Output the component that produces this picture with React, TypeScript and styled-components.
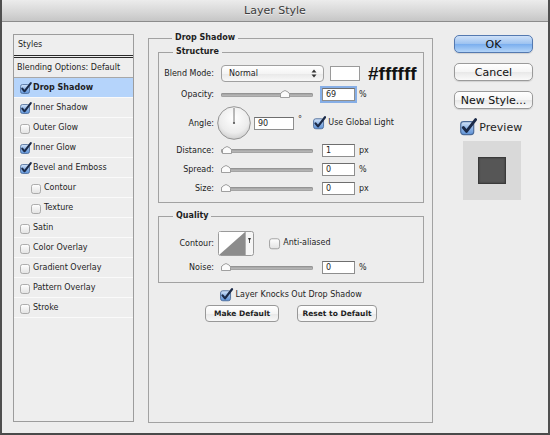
import React from "react";
import styled, { createGlobalStyle } from "styled-components";

const GlobalStyle = createGlobalStyle`
  html, body { margin: 0; padding: 0; background: #ededed; }
  body { font-family: "DejaVu Sans", "Noto Sans", sans-serif; }
`;

const styleItems = [
  { name: "Drop Shadow", checked: true, selected: true },
  { name: "Inner Shadow", checked: true },
  { name: "Outer Glow", checked: false },
  { name: "Inner Glow", checked: true },
  { name: "Bevel and Emboss", checked: true },
  { name: "Contour", checked: false, indent: true },
  { name: "Texture", checked: false, indent: true },
  { name: "Satin", checked: false },
  { name: "Color Overlay", checked: false },
  { name: "Gradient Overlay", checked: false },
  { name: "Pattern Overlay", checked: false },
  { name: "Stroke", checked: false },
];

const Checkbox = ({ checked, size = 9 }: { checked: boolean; size?: number }) => {
  const w = (size * 12) / 9;
  const h = (size * 12) / 9;
  return (
    <svg width={w} height={h} viewBox="0 0 12 12" style={{ flex: "none" }}>
      <defs>
        <linearGradient id="cbOn" x1="0" y1="0" x2="0" y2="1">
          <stop offset="0" stopColor="#d6e6fa" />
          <stop offset="0.5" stopColor="#8fb5e6" />
          <stop offset="1" stopColor="#5f92d6" />
        </linearGradient>
        <linearGradient id="cbOff" x1="0" y1="0" x2="0" y2="1">
          <stop offset="0" stopColor="#ffffff" />
          <stop offset="1" stopColor="#e2e2e2" />
        </linearGradient>
      </defs>
      <rect
        x="0.5"
        y="2.5"
        width="9"
        height="9"
        rx="2"
        fill={checked ? "url(#cbOn)" : "url(#cbOff)"}
        stroke={checked ? "#4a6a98" : "#9a9a9a"}
        strokeWidth="0.8"
      />
      {checked && (
        <path
          d="M2.3 6.6 L4.5 9.3 L10.8 1.1"
          fill="none"
          stroke="#1b2a48"
          strokeWidth="2"
          strokeLinecap="round"
          strokeLinejoin="round"
        />
      )}
    </svg>
  );
};

const Thumb = () => (
  <svg width="10" height="8" viewBox="0 0 10 8">
    <path
      d="M0.5 7.5 L0.5 4.5 Q0.5 3 2 2 L5 0.5 L8 2 Q9.5 3 9.5 4.5 L9.5 7.5 Z"
      fill="#fbfbfb"
      stroke="#8a8a8a"
      strokeWidth="0.8"
    />
  </svg>
);

const Slider = ({ value }: { value: number }) => (
  <Track>
    <ThumbWrap style={{ left: `${value * 0.86}px` }}>
      <Thumb />
    </ThumbWrap>
  </Track>
);

const Dial = ({ angle }: { angle: number }) => {
  const r = (angle * Math.PI) / 180;
  const x = 17 + Math.cos(r) * 15;
  const y = 17 - Math.sin(r) * 15;
  return (
    <svg width="34" height="34" viewBox="0 0 34 34">
      <defs>
        <radialGradient id="dialFill" cx="0.5" cy="0.35" r="0.65">
          <stop offset="0" stopColor="#ffffff" />
          <stop offset="0.7" stopColor="#ececec" />
          <stop offset="1" stopColor="#cfcfcf" />
        </radialGradient>
      </defs>
      <circle cx="17" cy="17" r="16.3" fill="url(#dialFill)" stroke="#8a8a8a" strokeWidth="0.9" />
      <line x1="17" y1="17" x2={x} y2={y} stroke="#6a6a6a" strokeWidth="0.9" />
      <circle cx="17" cy="17" r="1.1" fill="#555" />
    </svg>
  );
};

const ContourPicker = () => (
  <svg width="36" height="25" viewBox="0 0 36 25">
    <rect x="0.5" y="0.5" width="35" height="24" rx="2" fill="#f6f6f6" stroke="#9a9a9a" />
    <rect x="1" y="1" width="26" height="23" fill="#ffffff" />
    <polygon points="1,24 27,1 27,24" fill="#8c8c8c" />
    <line x1="27.5" y1="1" x2="27.5" y2="24" stroke="#b0b0b0" />
    <path d="M30 7 L33 7 L31.5 10 Z" fill="#333" />
    <line x1="31.5" y1="9" x2="31.5" y2="12" stroke="#333" strokeWidth="0.8" />
  </svg>
);

const SelectArrows = () => (
  <svg width="6" height="9" viewBox="0 0 6 9">
    <path d="M3 0.5 L5.5 3.5 L0.5 3.5 Z" fill="#333" />
    <path d="M3 8.5 L5.5 5.5 L0.5 5.5 Z" fill="#333" />
  </svg>
);

export default function App() {
  return (
    <>
      <GlobalStyle />
      <Window>
        <TitleBar>Layer Style</TitleBar>
        <Body>
          <StylesPanel>
            <PanelHeader>Styles</PanelHeader>
            <BlendRow>Blending Options: Default</BlendRow>
            {styleItems.map((item) => (
              <StyleRow key={item.name} $selected={!!item.selected} $indent={!!item.indent}>
                <Checkbox checked={item.checked} />
                <span>{item.name}</span>
              </StyleRow>
            ))}
          </StylesPanel>

          <MainGroup>
            <Legend>Drop Shadow</Legend>
            <SubGroup $pb={4}>
              <Legend>Structure</Legend>
              <Row $h={17} $mt={6}>
                <Label>Blend Mode:</Label>
                <Select>
                  <span>Normal</span>
                  <SelectArrows />
                </Select>
                <Swatch />
                <HexText>#ffffff</HexText>
              </Row>
              <Row $h={15} $mt={5}>
                <Label>Opacity:</Label>
                <Slider value={69} />
                <NumberBox $focused>69</NumberBox>
                <Unit>%</Unit>
              </Row>
              <Row $h={34} $mt={4} $gap={3}>
                <Label>Angle:</Label>
                <Dial angle={90} />
                <AngleBox>90</AngleBox>
                <Degree>°</Degree>
                <CheckLabel>
                  <Checkbox checked size={10} />
                  <span>Use Global Light</span>
                </CheckLabel>
              </Row>
              <Row $h={19} $mt={1}>
                <Label>Distance:</Label>
                <Slider value={1} />
                <NumberBox>1</NumberBox>
                <Unit>px</Unit>
              </Row>
              <Row $h={19}>
                <Label>Spread:</Label>
                <Slider value={0} />
                <NumberBox>0</NumberBox>
                <Unit>%</Unit>
              </Row>
              <Row $h={19}>
                <Label>Size:</Label>
                <Slider value={0} />
                <NumberBox>0</NumberBox>
                <Unit>px</Unit>
              </Row>
            </SubGroup>

            <SubGroup $pt={8} $pb={5} $mt={6}>
              <Legend>Quality</Legend>
              <Row $h={24} $gap={4}>
                <Label>Contour:</Label>
                <ContourPicker />
                <AntiAlias>
                  <Checkbox checked={false} size={10} />
                  <span>Anti-aliased</span>
                </AntiAlias>
              </Row>
              <Row $h={19} $mt={3}>
                <Label>Noise:</Label>
                <Slider value={0} />
                <NumberBox>0</NumberBox>
                <Unit>%</Unit>
              </Row>
            </SubGroup>

            <CenterRow $h={14} $mt={5}>
              <CheckLabel>
                <Checkbox checked size={10} />
                <span>Layer Knocks Out Drop Shadow</span>
              </CheckLabel>
            </CenterRow>
            <CenterRow $h={17} $mt={3} $gap={18}>
              <SmallButton $w={74}>Make Default</SmallButton>
              <SmallButton $w={80}>Reset to Default</SmallButton>
            </CenterRow>
          </MainGroup>

          <Side>
            <DialogButton $primary>OK</DialogButton>
            <DialogButton>Cancel</DialogButton>
            <DialogButton>New Style...</DialogButton>
            <PreviewToggle>
              <Checkbox checked size={13} />
              <span>Preview</span>
            </PreviewToggle>
            <PreviewBox>
              <PreviewSwatch />
            </PreviewBox>
          </Side>
        </Body>
      </Window>
    </>
  );
}

const Window = styled.div`
  box-sizing: border-box;
  width: 550px;
  height: 435px;
  background: #ededed;
  border-left: 2px solid #4f4f4f;
  border-right: 2px solid #4f4f4f;
  border-bottom: 2px solid #4a4a4a;
  display: flex;
  flex-direction: column;
  overflow: hidden;
  color: #1e1e1e;
  font-size: 8px;
`;

const TitleBar = styled.div`
  height: 21px;
  line-height: 21px;
  flex: none;
  text-align: center;
  font-size: 11px;
  color: #3c3c3c;
  background: linear-gradient(#ececec, #d6d6d6 60%, #c6c6c6);
  border-bottom: 1px solid #8c8c8c;
  text-shadow: 0 1px 0 rgba(255, 255, 255, 0.6);
`;

const Body = styled.div`
  display: flex;
  align-items: flex-start;
  padding-left: 11px;
`;

const StylesPanel = styled.div`
  box-sizing: border-box;
  width: 121px;
  height: 388px;
  margin-top: 12px;
  border: 1px solid #9c9c9c;
  background: #eeeeee;
  display: flex;
  flex-direction: column;
`;

const PanelHeader = styled.div`
  height: 20px;
  line-height: 20px;
  padding-left: 4px;
  border-bottom: 3px double #2a2a2a;
`;

const BlendRow = styled.div`
  height: 19px;
  line-height: 19px;
  padding-left: 3px;
  border-bottom: 1px solid #a8a8a8;
`;

const StyleRow = styled.div<{ $selected: boolean; $indent: boolean }>`
  height: 19px;
  display: flex;
  align-items: center;
  gap: 1px;
  padding-left: ${(p) => (p.$indent ? 17 : 6)}px;
  border-bottom: 1px solid #fafafa;
  background: ${(p) => (p.$selected ? "#b5d4fb" : "transparent")};
  font-weight: ${(p) => (p.$selected ? "bold" : "normal")};
  white-space: nowrap;
`;

const MainGroup = styled.fieldset`
  box-sizing: border-box;
  width: 285px;
  height: 392px;
  margin: 9px 0 0 14px;
  padding: 0 8px 0 9px;
  border: 1px solid #a2a2a2;
  min-inline-size: 0;
`;

const SubGroup = styled.fieldset<{ $pt?: number; $pb?: number; $mt?: number }>`
  box-sizing: border-box;
  margin: ${(p) => p.$mt ?? 0}px 0 0 0;
  padding: ${(p) => p.$pt ?? 0}px 0 ${(p) => p.$pb ?? 0}px 0;
  border: 1px solid #a2a2a2;
  min-inline-size: 0;
`;

const Legend = styled.legend`
  font-weight: bold;
  line-height: 14px;
  padding: 0 3px;
  margin-left: 14px;
  color: #1e1e1e;
`;

const Row = styled.div<{ $h: number; $mt?: number; $gap?: number }>`
  display: flex;
  align-items: center;
  height: ${(p) => p.$h}px;
  margin-top: ${(p) => p.$mt ?? 0}px;
  gap: ${(p) => p.$gap ?? 7}px;
  white-space: nowrap;
`;

const CenterRow = styled(Row)`
  justify-content: center;
`;

const Label = styled.span`
  width: 55px;
  flex: none;
  text-align: right;
  color: #222;
`;

const Select = styled.div`
  box-sizing: border-box;
  width: 103px;
  height: 17px;
  display: flex;
  align-items: center;
  justify-content: space-between;
  padding: 0 6px 0 7px;
  border: 1px solid #a0a0a0;
  border-radius: 4px;
  background: linear-gradient(#ffffff, #f4f4f4 50%, #e8e8e8 51%, #f8f8f8);
`;

const Swatch = styled.div`
  width: 28px;
  height: 13px;
  margin-left: -1px;
  background: #ffffff;
  border: 1px solid #9a9a9a;
`;

const HexText = styled.span`
  font-family: "Liberation Sans", Arial, sans-serif;
  font-weight: bold;
  font-size: 19px;
  color: #111;
  margin-left: 1px;
`;

const Track = styled.div`
  position: relative;
  width: 92px;
  height: 4px;
  border-radius: 2px;
  background: linear-gradient(#999999, #c4c4c4);
  box-shadow: inset 0 0 0 0.5px #8a8a8a;
  flex: none;
`;

const ThumbWrap = styled.div`
  position: absolute;
  top: -3px;
  display: flex;
`;

const NumberBox = styled.div<{ $focused?: boolean }>`
  box-sizing: border-box;
  width: 33px;
  height: 13px;
  line-height: 11px;
  margin-left: 2px;
  padding-left: 3px;
  background: #ffffff;
  border: 1px solid #8e8e8e;
  border-top-color: #6e6e6e;
  box-shadow: ${(p) => (p.$focused ? "0 0 0 2px #86aee6" : "none")};
`;

const AngleBox = styled(NumberBox)`
  width: 40px;
  margin-left: 0;
`;

const Unit = styled.span`
  margin-left: -3px;
`;

const Degree = styled.span`
  margin-left: 1px;
  margin-right: 8px;
  align-self: flex-start;
  margin-top: 9px;
`;

const CheckLabel = styled.label`
  display: flex;
  align-items: center;
  gap: 2px;
`;

const AntiAlias = styled(CheckLabel)`
  margin-left: 11px;
  gap: 1px;
`;

const SmallButton = styled.div<{ $w: number }>`
  box-sizing: border-box;
  width: ${(p) => p.$w}px;
  height: 17px;
  display: flex;
  align-items: center;
  justify-content: center;
  font-weight: bold;
  font-size: 7.5px;
  border: 1px solid #989898;
  border-radius: 4px;
  background: linear-gradient(#ffffff, #f4f4f4 50%, #e7e7e7 51%, #f7f7f7);
`;

const Side = styled.div`
  width: 79px;
  margin: 13px 0 0 21px;
  display: flex;
  flex-direction: column;
  gap: 10px;
`;

const DialogButton = styled.div<{ $primary?: boolean }>`
  box-sizing: border-box;
  height: 18px;
  display: flex;
  align-items: center;
  justify-content: center;
  font-size: 11px;
  color: #111;
  border-radius: 5px;
  border: 1px solid ${(p) => (p.$primary ? "#5479b0" : "#9a9a9a")};
  background: ${(p) =>
    p.$primary
      ? "linear-gradient(#cfe1f8, #9cc2f0 50%, #7aaeee 51%, #b3d4f8)"
      : "linear-gradient(#ffffff, #f5f5f5 50%, #e8e8e8 51%, #fafafa)"};
  box-shadow: 0 1px 1px rgba(0, 0, 0, 0.12);
`;

const PreviewToggle = styled.label`
  display: flex;
  align-items: center;
  gap: 2px;
  margin: 1px 0 0 6px;
  font-size: 11px;
  height: 14px;
`;

const PreviewBox = styled.div`
  width: 58px;
  height: 59px;
  margin: -3px 0 0 9px;
  background: #d9d9d9;
  display: flex;
  align-items: center;
  justify-content: center;
`;

const PreviewSwatch = styled.div`
  box-sizing: border-box;
  width: 28px;
  height: 27px;
  background: #565656;
  border: 1px solid #3a3a3a;
  box-shadow: inset 0 0 2px rgba(0, 0, 0, 0.4);
`;
